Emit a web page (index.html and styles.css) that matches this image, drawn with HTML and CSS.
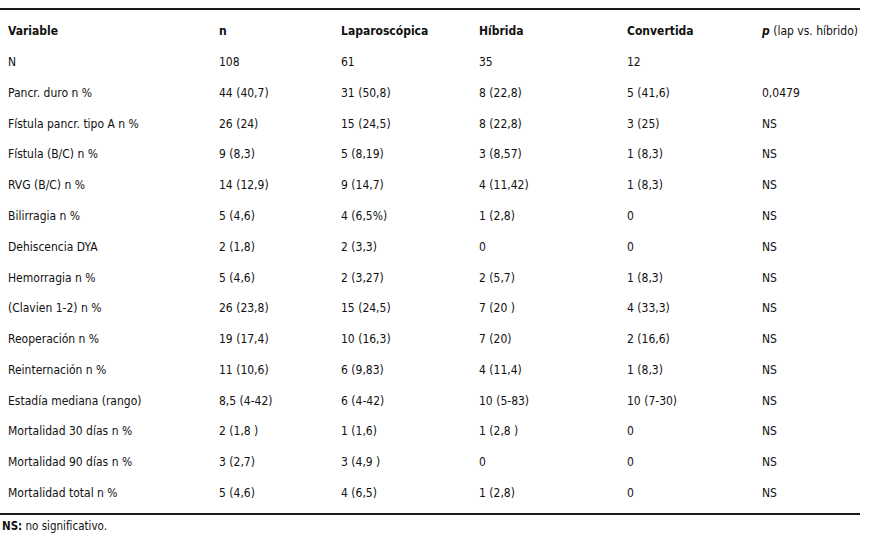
FILE: index.html
```html
<!DOCTYPE html>
<html lang="es">
<head>
<meta charset="utf-8">
<link rel="stylesheet" href="styles.css">
</head>
<body>
<div class="wrap">
  <div class="table">
    <div class="row head">
      <div>Variable</div><div>n</div><div>Laparoscópica</div><div>Híbrida</div><div>Convertida</div><div class="pcol"><i>p</i> (lap vs. híbrido)</div>
    </div>
    <div class="row"><div>N</div><div>108</div><div>61</div><div>35</div><div>12</div><div></div></div>
    <div class="row"><div>Pancr. duro n %</div><div>44 (40,7)</div><div>31 (50,8)</div><div>8 (22,8)</div><div>5 (41,6)</div><div>0,0479</div></div>
    <div class="row"><div>Fístula pancr. tipo A n %</div><div>26 (24)</div><div>15 (24,5)</div><div>8 (22,8)</div><div>3 (25)</div><div>NS</div></div>
    <div class="row"><div>Fístula (B/C) n %</div><div>9 (8,3)</div><div>5 (8,19)</div><div>3 (8,57)</div><div>1 (8,3)</div><div>NS</div></div>
    <div class="row"><div>RVG (B/C) n %</div><div>14 (12,9)</div><div>9 (14,7)</div><div>4 (11,42)</div><div>1 (8,3)</div><div>NS</div></div>
    <div class="row"><div>Bilirragia n %</div><div>5 (4,6)</div><div>4 (6,5%)</div><div>1 (2,8)</div><div>0</div><div>NS</div></div>
    <div class="row"><div>Dehiscencia DYA</div><div>2 (1,8)</div><div>2 (3,3)</div><div>0</div><div>0</div><div>NS</div></div>
    <div class="row"><div>Hemorragia n %</div><div>5 (4,6)</div><div>2 (3,27)</div><div>2 (5,7)</div><div>1 (8,3)</div><div>NS</div></div>
    <div class="row"><div>(Clavien 1-2) n %</div><div>26 (23,8)</div><div>15 (24,5)</div><div>7 (20 )</div><div>4 (33,3)</div><div>NS</div></div>
    <div class="row"><div>Reoperación n %</div><div>19 (17,4)</div><div>10 (16,3)</div><div>7 (20)</div><div>2 (16,6)</div><div>NS</div></div>
    <div class="row"><div>Reinternación n %</div><div>11 (10,6)</div><div>6 (9,83)</div><div>4 (11,4)</div><div>1 (8,3)</div><div>NS</div></div>
    <div class="row"><div>Estadía mediana (rango)</div><div>8,5 (4-42)</div><div>6 (4-42)</div><div>10 (5-83)</div><div>10 (7-30)</div><div>NS</div></div>
    <div class="row"><div>Mortalidad 30 días n %</div><div>2 (1,8 )</div><div>1 (1,6)</div><div>1 (2,8 )</div><div>0</div><div>NS</div></div>
    <div class="row"><div>Mortalidad 90 días n %</div><div>3 (2,7)</div><div>3 (4,9 )</div><div>0</div><div>0</div><div>NS</div></div>
    <div class="row"><div>Mortalidad total n %</div><div>5 (4,6)</div><div>4 (6,5)</div><div>1 (2,8)</div><div>0</div><div>NS</div></div>
  </div>
  <p class="note"><b>NS:</b> no significativo.</p>
</div>
</body>
</html>
```
FILE: styles.css
```css
html, body {
  margin: 0;
  padding: 0;
  background: #fff;
}
body {
  font-family: "DejaVu Sans Condensed", "DejaVu Sans", sans-serif;
  font-stretch: condensed;
  font-size: 12px;
  color: #111;
}
.wrap {
  width: 860px;
  padding-top: 8px;
}
.table {
  border-top: 2px solid #1a1a1a;
  border-bottom: 2px solid #1a1a1a;
  padding: 6px 0 5px;
}
.row {
  display: grid;
  grid-template-columns: 211px 122px 138px 148px 135px 106px;
  height: 30.78px;
  align-items: center;
}
.row > div {
  padding-left: 8px;
  white-space: nowrap;
}
.head {
  font-weight: bold;
}
.head .pcol {
  font-weight: normal;
}
.head .pcol i {
  font-weight: bold;
}
.note {
  margin: 4px 0 0;
  padding-left: 2px;
  font-size: 11.5px;
}
```
